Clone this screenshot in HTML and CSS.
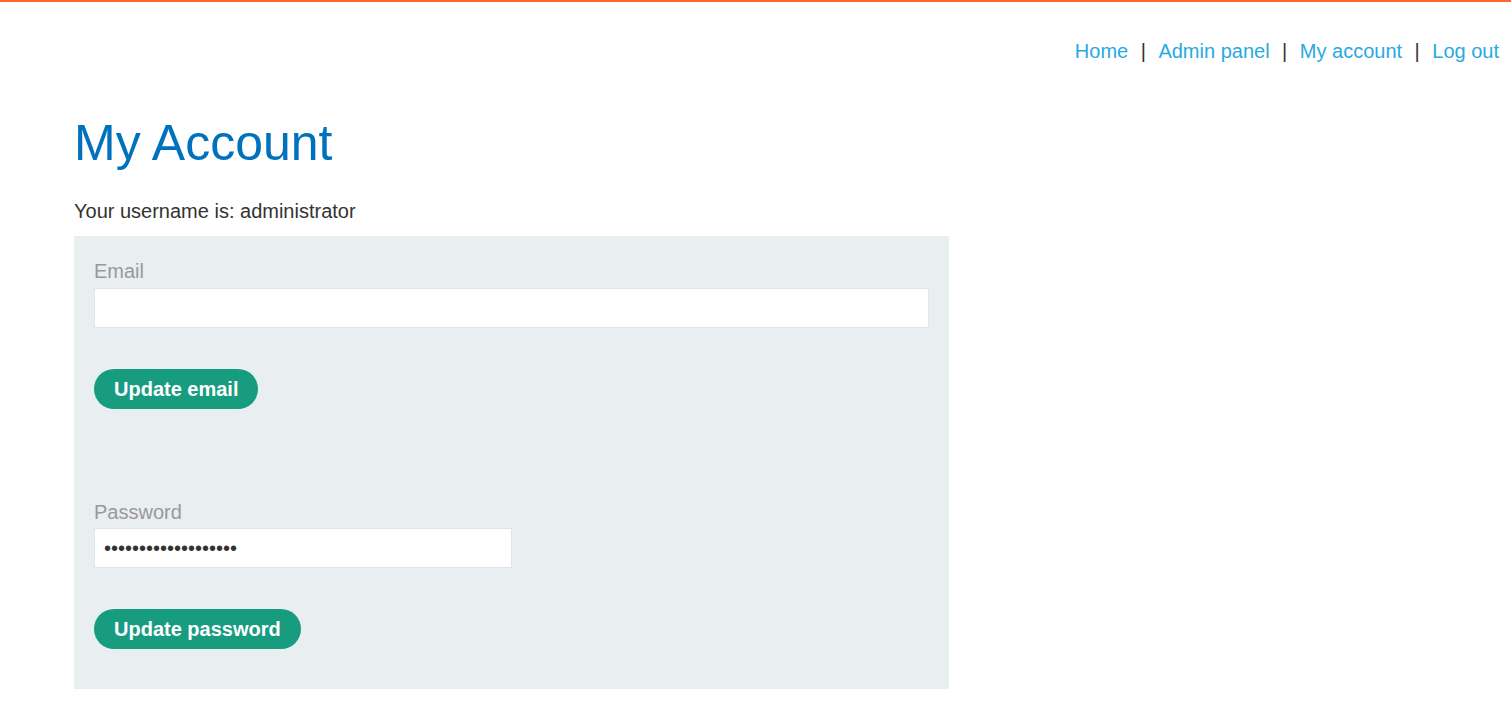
FILE: index.html
```html
<!DOCTYPE html>
<html lang="en">
<head>
<meta charset="utf-8">
<title>My Account</title>
<link rel="stylesheet" href="styles.css">
</head>
<body>
<div class="topbar"></div>
<header class="nav">
  <a href="#">Home</a><span class="sep">|</span>
  <a href="#">Admin panel</a><span class="sep">|</span>
  <a href="#">My account</a><span class="sep">|</span>
  <a href="#">Log out</a>
</header>
<main class="container">
  <h1 class="title">My Account</h1>
  <p class="username">Your username is: administrator</p>
  <div class="panel">
    <form class="form-block">
      <label class="label" for="email">Email</label>
      <input class="input input-wide" id="email" type="email">
      <button class="btn" type="button">Update email</button>
    </form>
    <form class="form-block form-password">
      <label class="label" for="password">Password</label>
      <input class="input input-half" id="password" type="password" value="abcdefghijklmnopqrs">
      <button class="btn" type="button">Update password</button>
    </form>
  </div>
</main>
</body>
</html>
```
FILE: styles.css
```css
* { box-sizing: border-box; }
html, body { margin: 0; padding: 0; background: #fff; }
body {
  font-family: "Liberation Sans", Arial, sans-serif;
  font-size: 20px;
  color: #333332;
}
.topbar { height: 2px; background: #ff6633; }
.nav {
  display: flex;
  justify-content: flex-end;
  align-items: center;
  gap: 12.5px;
  padding: 38px 12px 0 0;
  line-height: 23px;
}
.nav a { color: #29a9e1; text-decoration: none; }
.nav .sep { color: #333332; }
.container { padding-left: 74px; }
.title {
  margin: 52px 0 0;
  font-size: 50px;
  font-weight: normal;
  line-height: 57px;
  color: #0071bc;
}
.username { margin: 28px 0 13px; line-height: 23px; }
.panel {
  width: 875px;
  background: #e9eef1;
  padding: 24px 20px 40px;
}
.form-block { display: flex; flex-direction: column; align-items: flex-start; }
.form-password { margin-top: 92px; }
.label { display: block; color: #999; line-height: 23px; margin-bottom: 5px; }
.form-password .label { margin-bottom: 4px; }
.input {
  height: 40px;
  border: 1px solid #e2e4e6;
  background: #fff;
  padding: 0 9px;
  font-family: "Liberation Sans", Arial, sans-serif;
  font-size: 20px;
  color: #333;
}
.input-wide { width: 835px; }
.input-half { width: 418px; }
.btn {
  margin-top: 41px;
  height: 40px;
  padding: 0 20px;
  border: 0;
  border-radius: 20px;
  background: #179c80;
  color: #fff;
  font-family: "Liberation Sans", Arial, sans-serif;
  font-size: 20px;
  font-weight: bold;
  cursor: pointer;
}
```
